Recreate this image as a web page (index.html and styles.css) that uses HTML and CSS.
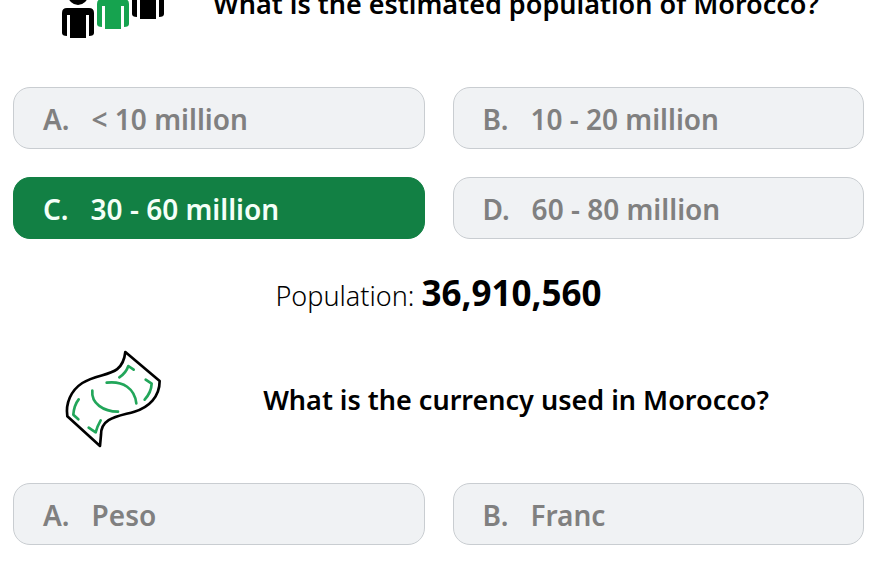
FILE: index.html
```html
<!DOCTYPE html>
<html lang="en">
<head>
<meta charset="utf-8">
<title>Morocco quiz</title>
<link rel="stylesheet" href="styles.css">
</head>
<body>
<main class="quiz">
  <section class="question">
    <header class="question-head">
      <svg class="icon" viewBox="0 0 110 100" aria-hidden="true">
        <defs>
          <g id="person">
            <circle cx="16" cy="-13" r="10"/>
            <path d="M5 0H27Q32 0 32 5V25Q32 28 27 28V7H24V30H8V7H5V28Q0 28 0 25V5Q0 0 5 0Z"/>
          </g>
        </defs>
        <use href="#person" x="4" y="55"/>
        <use href="#person" x="39" y="46" fill="#16a34f"/>
        <use href="#person" x="74" y="36"/>
      </svg>
      <h2 class="title">What is the estimated population of Morocco?</h2>
    </header>
    <div class="options">
      <button class="option" type="button"><span>A.</span><span>&lt; 10 million</span></button>
      <button class="option" type="button"><span>B.</span><span>10 - 20 million</span></button>
      <button class="option correct" type="button"><span>C.</span><span>30 - 60 million</span></button>
      <button class="option" type="button"><span>D.</span><span>60 - 80 million</span></button>
    </div>
    <p class="answer">Population: <strong>36,910,560</strong></p>
  </section>
  <section class="question">
    <header class="question-head">
      <svg class="icon" viewBox="0 0 110 100" aria-hidden="true">
        <g transform="translate(-3 -9) scale(.3333)" fill="none" stroke-linecap="round" stroke-linejoin="round">
          <path stroke="#000" stroke-width="8" d="M211 36L314 123C314 170 282 202 238 215C190 229 137 232 138 285L135 318L37 229C31 190 48 151 82 129C139 93 202 116 211 36Z"/>
          <path stroke="#22a65a" stroke-width="8" d="M155 128C205 122 239 146 244 190M112 152C108 190 145 215 189 215M193 112Q213 99 220 78L236 89M272 119L290 131Q289 157 269 179M71 178Q57 196 55 224L70 238M137 241Q126 260 122 277L101 263"/>
        </g>
      </svg>
      <h2 class="title">What is the currency used in Morocco?</h2>
    </header>
    <div class="options">
      <button class="option" type="button"><span>A.</span><span>Peso</span></button>
      <button class="option" type="button"><span>B.</span><span>Franc</span></button>
    </div>
  </section>
</main>
</body>
</html>
```
FILE: styles.css
```css
* {
  box-sizing: border-box;
}

body {
  margin: 0;
  background: #fff;
  color: #000;
  font-family: "Segoe UI", "Noto Sans", "Open Sans", sans-serif;
  overflow: hidden;
}

/* The list is scrolled slightly, so its first heading is cut at the top. */
.quiz {
  margin-top: -47px;
  padding: 0 12px 24px 13px;
}

.question-head {
  display: flex;
  align-items: center;
  height: 100px;
  margin-bottom: 34px;
  padding-left: 45px;
}

.icon {
  flex: none;
  width: 110px;
  height: 100px;
}

.title {
  flex: 1;
  margin: 0;
  padding-top: 2px;
  font-size: 27px;
  font-weight: 600;
  line-height: 36px;
  text-align: center;
  white-space: nowrap;
}

.options {
  display: grid;
  grid-template-columns: 1fr 1fr;
  gap: 28px;
}

.option {
  display: flex;
  align-items: center;
  gap: 22px;
  height: 62px;
  padding: 1px 29px 0;
  border: 1px solid #c9cdd1;
  border-radius: 17px;
  background: #f0f2f4;
  color: #808080;
  font-family: inherit;
  font-size: 28px;
  font-weight: 600;
  line-height: 36px;
  text-align: left;
}

.correct {
  border-color: #128044;
  background: #128044;
  color: #f4fff8;
}

.answer {
  margin: 0;
  height: 110px;
  padding-top: 31px;
  font-size: 27px;
  font-weight: 300;
  line-height: 46px;
  text-align: center;
}

.answer strong {
  font-size: 35px;
  font-weight: 700;
}
```
